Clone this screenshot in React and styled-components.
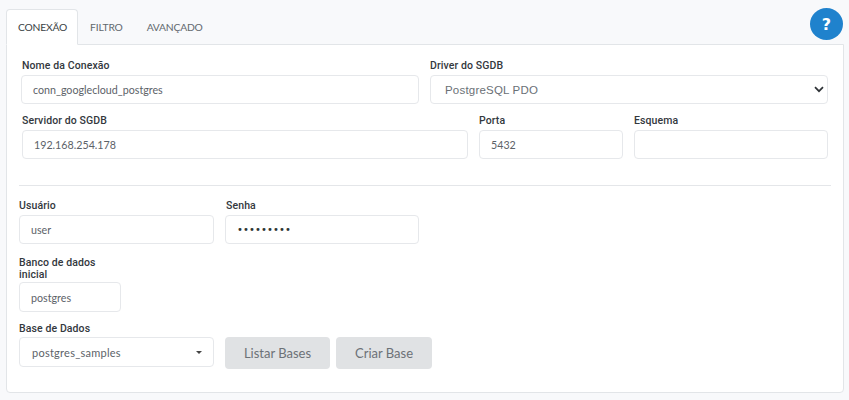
import React from "react"
import styled, { createGlobalStyle } from "styled-components"

const GlobalStyle = createGlobalStyle`
  html, body {
    margin: 0;
    padding: 0;
    background: #f8f9fb;
  }
  * {
    box-sizing: border-box;
  }
`

const Page = styled.div`
  position: relative;
  width: 849px;
  height: 400px;
  padding: 9px 5px 0 6px;
  overflow: hidden;
  font-family: Lato, sans-serif;
`

const HelpButton = styled.button`
  position: absolute;
  top: 8px;
  right: 6px;
  width: 33px;
  height: 32px;
  border: 0;
  border-radius: 50%;
  padding: 0;
  background: #1f82cd;
  color: #fff;
  font-family: "DejaVu Sans", sans-serif;
  font-size: 16px;
  font-weight: 700;
`

const TabBar = styled.div`
  display: flex;
  height: 36px;
  margin-bottom: -1px;
`

const Tab = styled.div`
  display: flex;
  align-items: center;
  padding: 0 ${(p) => (p.$active ? "10px 0 11px" : "11px")};
  height: 36px;
  font-size: 10.3px;
  letter-spacing: -0.2px;
  color: ${(p) => (p.$active ? "#3a3f44" : "#62686e")};
  background: ${(p) => (p.$active ? "#fff" : "transparent")};
  border: 1px solid ${(p) => (p.$active ? "#e2e5e8" : "transparent")};
  border-bottom-color: ${(p) => (p.$active ? "#fff" : "transparent")};
  border-radius: 4px 4px 0 0;
  position: relative;
  z-index: 1;
`

const Panel = styled.div`
  height: 349px;
  background: #fff;
  border: 1px solid #e2e5e8;
  border-radius: 0 0 4px 4px;
  padding: 15px 12px 0 12px;
`

const Row = styled.div`
  display: flex;
  gap: ${(p) => p.$gap || 11}px;
  align-items: flex-start;
  padding-left: ${(p) => p.$indent || 0}px;
  margin-bottom: ${(p) => p.$after || 0}px;
`

const Field = styled.div`
  width: ${(p) => p.$width}px;
  flex: none;
`

const Label = styled.label`
  display: block;
  font-family: Roboto, sans-serif;
  font-size: 10.5px;
  font-weight: 500;
  line-height: 12px;
  letter-spacing: 0.1px;
  color: #33383d;
  padding-left: ${(p) => p.$nudge || 0}px;
  margin-bottom: ${(p) => p.$below ?? 3}px;
`

const Input = styled.div`
  display: flex;
  align-items: center;
  height: ${(p) => p.$height || 29}px;
  padding-left: 11px;
  background: #fff;
  border: 1px solid #e6e8eb;
  border-radius: 4px;
  font-size: 10.7px;
  color: #5c6268;
`

const DriverSelect = styled(Input)`
  justify-content: space-between;
  padding-right: 3px;
  padding-left: 14px;
  font-family: "Liberation Sans", sans-serif;
  font-size: 11.5px;
  letter-spacing: 0.2px;
  color: #6a7076;
`

const BaseSelect = styled(Input)`
  justify-content: space-between;
  padding-right: 11px;
  padding-left: 12px;
  font-size: 11px;
  letter-spacing: 0.25px;
`

const Caret = styled.span`
  width: 0;
  height: 0;
  border-left: 3px solid transparent;
  border-right: 3px solid transparent;
  border-top: 3px solid #444;
`

const Divider = styled.hr`
  border: 0;
  border-top: 1px solid #e4e6e9;
  margin: 0 0 14px 0;
  width: 812px;
`

const Dots = styled.span`
  color: #2f3337;
  font-family: "DejaVu Sans", sans-serif;
  font-size: 10px;
  letter-spacing: 0.1px;
`

const ActionButton = styled.button`
  height: 32px;
  width: ${(p) => p.$width}px;
  flex: none;
  border: 0;
  border-radius: 4px;
  background: #e0e2e4;
  color: #6c7177;
  font-family: Lato, sans-serif;
  font-size: 13px;
  padding: 0;
`

const Actions = styled.div`
  display: flex;
  gap: 6px;
  padding-top: 14px;
`

function Chevron() {
  return (
    <svg width="10" height="7" viewBox="0 0 10 7" fill="none">
      <path d="M1 1.2 5 5.2 9 1.2" stroke="#2f3337" strokeWidth="1.7" />
    </svg>
  )
}

function App() {
  return (
    <Page>
      <GlobalStyle />
      <HelpButton>?</HelpButton>
      <TabBar>
        <Tab $active>CONEXÃO</Tab>
        <Tab>FILTRO</Tab>
        <Tab>AVANÇADO</Tab>
      </TabBar>
      <Panel>
        <Row $indent={2} $after={11}>
          <Field $width={398}>
            <Label $nudge={1}>Nome da Conexão</Label>
            <Input>conn_googlecloud_postgres</Input>
          </Field>
          <Field $width={398}>
            <Label>Driver do SGDB</Label>
            <DriverSelect>
              PostgreSQL PDO
              <Chevron />
            </DriverSelect>
          </Field>
        </Row>
        <Row $indent={3} $after={26}>
          <Field $width={446}>
            <Label>Servidor do SGDB</Label>
            <Input>192.168.254.178</Input>
          </Field>
          <Field $width={144}>
            <Label>Porta</Label>
            <Input>5432</Input>
          </Field>
          <Field $width={194}>
            <Label>Esquema</Label>
            <Input />
          </Field>
        </Row>
        <Divider />
        <Row $after={13}>
          <Field $width={195}>
            <Label>Usuário</Label>
            <Input>user</Input>
          </Field>
          <Field $width={194}>
            <Label $nudge={1}>Senha</Label>
            <Input>
              <Dots>•••••••••</Dots>
            </Input>
          </Field>
        </Row>
        <Row $after={11}>
          <Field $width={102}>
            <Label $below={1}>
              Banco de dados
              <br />
              inicial
            </Label>
            <Input $height={30}>postgres</Input>
          </Field>
        </Row>
        <Row>
          <Field $width={195}>
            <Label $below={2}>Base de Dados</Label>
            <BaseSelect $height={30}>
              postgres_samples
              <Caret />
            </BaseSelect>
          </Field>
          <Actions>
            <ActionButton $width={105}>Listar Bases</ActionButton>
            <ActionButton $width={96}>Criar Base</ActionButton>
          </Actions>
        </Row>
      </Panel>
    </Page>
  )
}

export default App
